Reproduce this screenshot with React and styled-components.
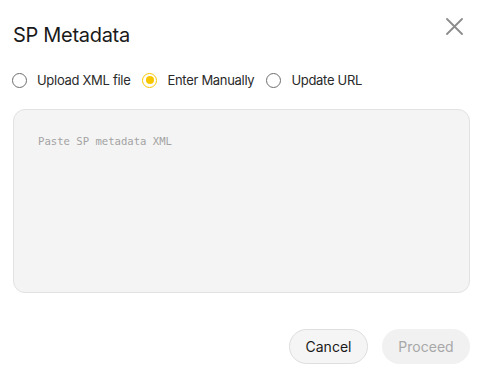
import React, { useState } from 'react';
import styled, { createGlobalStyle } from 'styled-components';

const GlobalStyle = createGlobalStyle`
  html, body {
    margin: 0;
    padding: 0;
    background: #ffffff;
  }
  body {
    font-family: Inter, "Noto Sans", sans-serif;
    color: #1c1c1c;
  }
`;

const options = [
  { id: 'upload', label: 'Upload XML file' },
  { id: 'manual', label: 'Enter Manually' },
  { id: 'url', label: 'Update URL' },
];

const App = () => {
  const [mode, setMode] = useState('manual');

  return (
    <>
      <GlobalStyle />
      <Dialog>
        <Header>
          <Title>SP Metadata</Title>
          <CloseButton aria-label="Close">
            <svg width="17" height="17" viewBox="0 0 17 17" fill="none">
              <path d="M1 1L16 16M16 1L1 16" stroke="#8c8c8c" strokeWidth="1.8" strokeLinecap="round" />
            </svg>
          </CloseButton>
        </Header>

        <RadioGroup>
          {options.map((opt) => (
            <RadioLabel key={opt.id} onClick={() => setMode(opt.id)}>
              <RadioCircle $checked={mode === opt.id} />
              {opt.label}
            </RadioLabel>
          ))}
        </RadioGroup>

        <MetadataInput placeholder="Paste SP metadata XML" />

        <Footer>
          <CancelButton>Cancel</CancelButton>
          <ProceedButton disabled>Proceed</ProceedButton>
        </Footer>
      </Dialog>
    </>
  );
};

export default App;

const Dialog = styled.div`
  display: flex;
  flex-direction: column;
  width: 483px;
  height: 377px;
  box-sizing: border-box;
  padding: 17px 13px 13px 13px;
`;

const Header = styled.div`
  display: flex;
  align-items: flex-start;
  justify-content: space-between;
`;

const Title = styled.h2`
  margin: 5px 0 0 0;
  font-size: 20px;
  font-weight: 400;
  line-height: 26px;
  letter-spacing: -0.3px;
  color: #1a1a1a;
`;

const CloseButton = styled.button`
  display: flex;
  align-items: center;
  justify-content: center;
  margin: 1px 7px 0 0;
  padding: 0;
  border: none;
  background: none;
  cursor: pointer;
`;

const RadioGroup = styled.div`
  display: flex;
  align-items: center;
  gap: 13px;
  margin-top: 23px;
`;

const RadioLabel = styled.label`
  display: flex;
  align-items: center;
  gap: 10px;
  font-size: 13px;
  line-height: 18px;
  letter-spacing: -0.3px;
  color: #2a2a2a;
  cursor: pointer;
`;

const RadioCircle = styled.span`
  position: relative;
  width: 15px;
  height: 15px;
  box-sizing: border-box;
  border-radius: 50%;
  border: 1.3px solid ${(p) => (p.$checked ? '#f6c700' : '#6e6e6e')};
  margin-left: -1px;

  &::after {
    content: '';
    position: absolute;
    top: 50%;
    left: 50%;
    width: 8px;
    height: 8px;
    border-radius: 50%;
    background: #f8c600;
    transform: translate(-50%, -50%);
    display: ${(p) => (p.$checked ? 'block' : 'none')};
  }
`;

const MetadataInput = styled.textarea`
  margin-top: 20px;
  height: 184px;
  box-sizing: border-box;
  padding: 23px 24px;
  border: 1px solid #e2e2e2;
  border-radius: 12px;
  background: #f4f4f4;
  font-family: "DejaVu Sans Mono", monospace;
  font-size: 10.6px;
  line-height: 16px;
  color: #333;
  resize: none;
  outline: none;

  &::placeholder {
    color: #a3a3a3;
  }
`;

const Footer = styled.div`
  display: flex;
  justify-content: flex-end;
  gap: 14px;
  margin-top: auto;
`;

const BaseButton = styled.button`
  height: 35px;
  border-radius: 18px;
  font-family: Inter, "Noto Sans", sans-serif;
  font-size: 14px;
  cursor: pointer;
`;

const CancelButton = styled(BaseButton)`
  width: 79px;
  border: 1px solid #dedede;
  background: #f5f5f5;
  color: #1a1a1a;
`;

const ProceedButton = styled(BaseButton)`
  width: 88px;
  border: none;
  background: #f1f1f1;
  color: #a8a8a8;

  &:disabled {
    cursor: not-allowed;
  }
`;
